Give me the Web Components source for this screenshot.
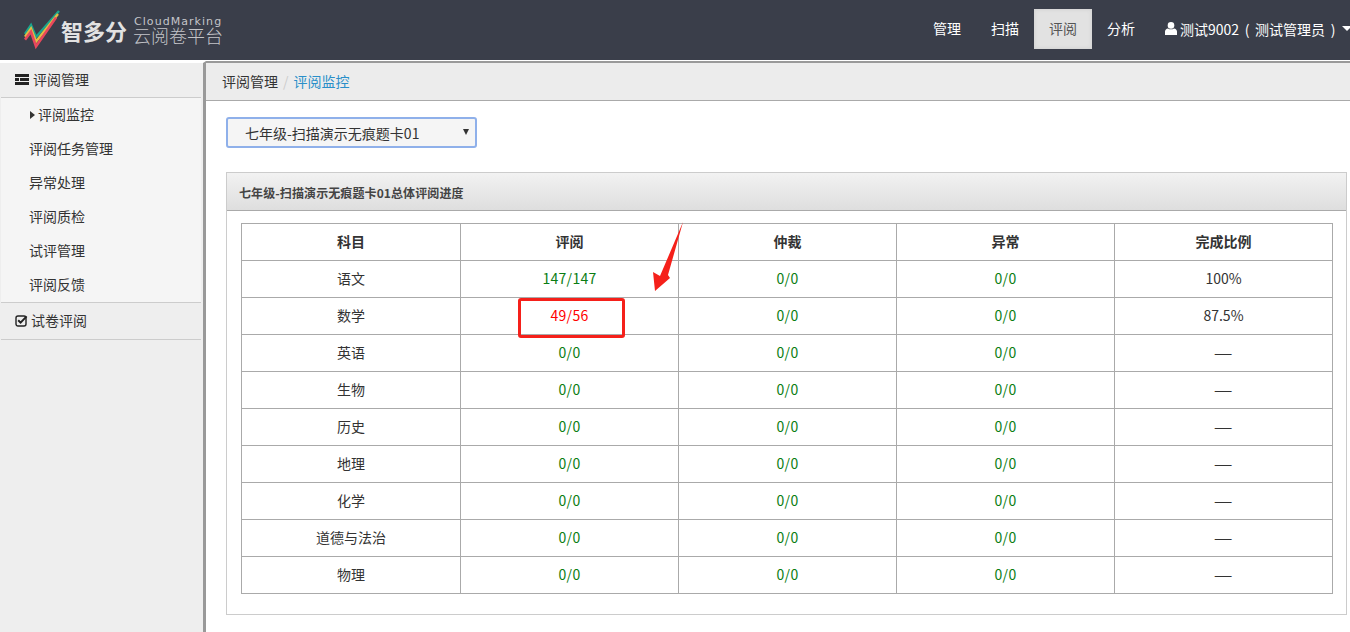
<!DOCTYPE html>
<html lang="zh-CN">
<head>
<meta charset="utf-8">
<title>评阅监控</title>
<style>
html,body{margin:0;height:632px;overflow:hidden;background:#fff}
body{font:14px/20px "Noto Sans CJK SC","Liberation Sans",sans-serif;color:#333}
</style>
</head>
<body>
<app-shell>
  <app-header slot="header"></app-header>
  <side-menu slot="side"></side-menu>
  <bread-crumbs slot="main"></bread-crumbs>
  <main-content slot="main"></main-content>
</app-shell>
<script>
const def=(name,html,setup)=>customElements.define(name,class extends HTMLElement{
  constructor(){super();this.attachShadow({mode:'open'}).innerHTML=html;}
  connectedCallback(){if(setup)setup.call(this,this.shadowRoot);}
});
def('app-shell',`<style>
:host{display:grid;grid-template-columns:206px 1fr;grid-template-rows:61px 571px;height:632px;width:1350px;overflow:hidden}
.h{grid-column:1/3;display:block}
.s{display:block;background:#eee;border-right:3px solid #999;border-top:2px solid #fff;padding-right:2px;min-height:0;box-sizing:border-box}
.m{display:block;border-top:2px solid #999;min-width:0}
</style><div class="h"><slot name="header"></slot></div><div class="s"><slot name="side"></slot></div><div class="m"><slot name="main"></slot></div>`);

def('app-header',`<style>
:host{display:flex;height:60px;background:#3a3e4a;border-bottom:1px solid #fff;align-items:center;justify-content:space-between;font-family:"Noto Sans CJK SC",sans-serif}
.logo{display:flex;align-items:center;margin-left:24px;height:60px}
.mark{margin-right:1px;display:block;flex:none}
.big{font-size:22px;font-weight:700;color:#e2e2e2;line-height:30px;margin-top:-1px;white-space:nowrap}
.sub{margin-left:6px;color:#c4c5c9;display:flex;flex-direction:column;margin-top:-1px}
.en{font:11px/11px "DejaVu Sans",sans-serif;letter-spacing:1.05px;height:11px;margin-left:1px;white-space:nowrap}
.cn{font-size:18px;line-height:16px;font-weight:300;white-space:nowrap}
nav{display:flex;align-items:flex-start;height:60px;width:432px;flex:none;overflow:hidden}
a{display:block;flex:none;width:58px;height:40px;margin-top:9px;line-height:39px;text-align:center;color:#fff;font-size:14px}
a.on{background:#e2e2e2;color:#555;box-shadow:inset 0 0 4px #ccc}
.user{display:flex;flex:none;align-items:center;color:#fff;height:39px;margin:9px 0 0 15px;white-space:nowrap}
.user svg{margin-right:3px}
.user span.t{word-spacing:2.5px}
.caret{margin-left:7px;width:0;height:0;border:5px solid transparent;border-top-color:#fff;border-bottom:0}
</style>
<div class="logo">
<svg class="mark" width="36" height="40" viewBox="0 0 36 40" aria-hidden="true">
<path d="M1 24 L7 15 L12 27 L35 1" fill="none" stroke="#1aa58d" stroke-width="2.4"/>
<path d="M1 26.8 L7 18.4 L12 31.5 L34 4" fill="none" stroke="#e2bd45" stroke-width="2.4"/>
<path d="M1 29.6 L7 21.8 L12 36.4 L32 7.5" fill="none" stroke="#e8485c" stroke-width="2.6"/>
</svg>
<div class="big">智多分</div>
<div class="sub"><div class="en">CloudMarking</div><div class="cn">云阅卷平台</div></div>
</div>
<nav>
<a>管理</a><a>扫描</a><a class="on">评阅</a><a>分析</a>
<div class="user"><svg width="12" height="13" viewBox="0 0 12 13" aria-hidden="true"><circle cx="6" cy="3.4" r="3.3" fill="#fff"/><path d="M0 13V9.5C0 7.8 1.4 6.6 3 6.4 4.6 7.6 7.4 7.6 9 6.4 10.6 6.6 12 7.8 12 9.5V13Z" fill="#fff"/></svg><span class="t">测试9002 ( 测试管理员 )</span><span class="caret"></span></div>
</nav>`);

def('side-head',`<style>
:host{display:flex;align-items:center;box-sizing:content-box;height:32px;padding-bottom:2px;margin-left:1px;border-bottom:1px solid #ccc;font-size:14px;color:#333;background:#eee}
.i{display:flex;width:14px;margin:0 4px 0 14px;flex:none}
</style><span class="i"><slot name="icon"></slot></span><slot></slot>`);

def('side-item',`<style>
:host{display:flex;align-items:center;height:32px;padding:0 0 2px 28px;background:#f5f5f5;font-size:14px;color:#333;position:relative}
:host([active]){padding-left:37px}
:host([active])::before{content:"";position:absolute;left:29px;top:13px;border:4px solid transparent;border-left:5px solid #333;border-right:0}
</style><slot></slot>`);

def('side-menu',`<style>
:host{display:block}
.list{display:block;border-bottom:1px solid #ccc;margin-left:1px}
.last{height:34px}
</style>
<side-head><svg slot="icon" width="14" height="11" viewBox="0 0 14 11" aria-hidden="true"><path d="M0 0H14V3H0ZM0 4H4V7H0ZM5 4H14V7H5ZM0 8H14V11H0Z" fill="#222"/></svg>评阅管理</side-head>
<div class="list">
<side-item active>评阅监控</side-item><side-item>评阅任务管理</side-item><side-item>异常处理</side-item><side-item>评阅质检</side-item><side-item>试评管理</side-item><side-item>评阅反馈</side-item>
</div>
<side-head class="last"><svg slot="icon" width="13" height="13" viewBox="0 0 13 13" aria-hidden="true"><rect x="1" y="2" width="10" height="10" rx="2" fill="none" stroke="#222" stroke-width="1.4"/><path d="M3.2 6.2 5.6 8.6 11.6 2.4" fill="none" stroke="#222" stroke-width="2"/></svg><span style="margin-left:-2px">试卷评阅</span></side-head>`);

def('bread-crumbs',`<style>
:host{display:flex;align-items:center;height:36px;padding:0 0 1px 16px;background:#ececec;border-bottom:1px solid #aaa;font-size:14px;color:#333}
i{font-style:normal;color:#ccc;margin:0 5px}
b{font-weight:400;color:#2a8fc9}
</style>评阅管理<i>/</i><b>评阅监控</b>`);

def('exam-select',`<style>
:host{display:flex;align-items:center;justify-content:space-between;box-sizing:border-box;width:251px;height:31px;background:#f5f5f5;border:2px solid #8fb0ea;border-radius:3px;padding:0 6px 0 17px;font-size:14px;color:#333}
i{width:0;height:0;border:3.5px solid transparent;border-top:6px solid #333;border-bottom:0;margin-top:-2px}
</style><span><slot></slot></span><i></i>`);

def('data-panel',`<style>
:host{display:block;box-sizing:border-box;width:1121px;border:1px solid #ccc;height:443px}
header{height:38px;box-sizing:border-box;border-bottom:1px solid #aaa;background:linear-gradient(#f2f2f2,#dedede);display:flex;align-items:center;padding:2px 0 0 12px;font-size:12px;font-weight:700;color:#444;letter-spacing:.1px}
.b{padding:12px 13px 0 14px;position:relative}
</style><header><slot name="title"></slot></header><div class="b"><slot></slot></div>`);

def('progress-table',`<style>
:host{display:block;width:1091px}
table{border-collapse:collapse;width:1091px;table-layout:fixed;font-size:14px;color:#333}
th,td{border:1px solid #aaa;height:34px;padding:0 0 2px;text-align:center;line-height:20px}
th{font-weight:700;font-size:14px}
.g,.r{letter-spacing:.3px}
.g{color:#0a7d12}.r{color:#f00}
.dash{display:inline-block;transform:scaleX(1.5)}
</style><table><colgroup><col style="width:219px"><col style="width:218px"><col style="width:218px"><col style="width:218px"><col style="width:218px"></colgroup><thead><tr><th>科目</th><th>评阅</th><th>仲裁</th><th>异常</th><th>完成比例</th></tr></thead><tbody></tbody></table>`,function(r){
  const rows=[['语文','147/147','100%'],['数学','49/56','87.5%'],['英语','0/0','—'],['生物','0/0','—'],['历史','0/0','—'],['地理','0/0','—'],['化学','0/0','—'],['道德与法治','0/0','—'],['物理','0/0','—']];
  r.querySelector('tbody').innerHTML=rows.map(([s,p,c])=>`<tr><td>${s}</td><td class="${p==='49/56'?'r':'g'}">${p}</td><td class="g">0/0</td><td class="g">0/0</td><td>${c==='—'?'<span class="dash">—</span>':c}</td></tr>`).join('');
});

def('mark-up',`<style>
:host{position:absolute;left:0;top:0;width:0;height:0;display:block}
.box{position:absolute;left:291px;top:87px;width:107px;height:40px;box-sizing:border-box;border:3px solid #f5201a;border-radius:3px}
svg{position:absolute;left:418px;top:9px;display:block}
</style><div class="box"></div><svg width="40" height="76" viewBox="0 0 40 76" aria-hidden="true"><path d="M38 2 23 55 25 58 10 71 8 52 15 56Z" fill="#f5201a"/></svg>`);

def('main-content',`<style>
:host{display:block;padding:16px 0 0 20px}
exam-select{margin-bottom:24px}
</style><exam-select>七年级-扫描演示无痕题卡01</exam-select>
<data-panel><span slot="title">七年级-扫描演示无痕题卡01总体评阅进度</span><progress-table></progress-table><mark-up></mark-up></data-panel>`);
</script>
</body>
</html>
